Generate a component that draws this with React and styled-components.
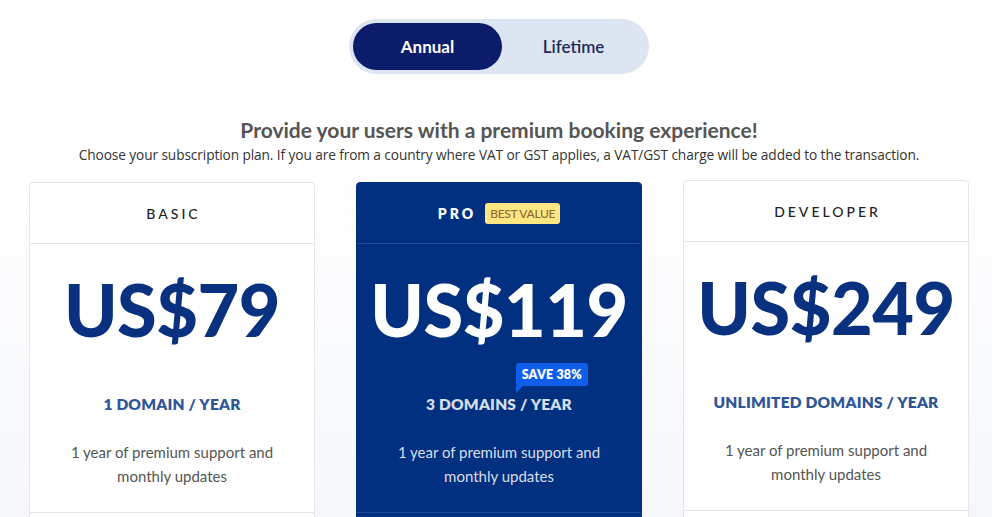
import styled, { createGlobalStyle } from "styled-components";

const Global = createGlobalStyle`
html,body{margin:0;padding:0;}
body{font-family:Lato,"Open Sans",sans-serif;background:linear-gradient(180deg,#ffffff 0%,#ffffff 30%,#f5f7fb 100%);min-height:517px;overflow:hidden;}
`;

const Page = styled.main`
width:992px;height:517px;display:flex;flex-direction:column;align-items:center;
padding:19px 0 0 6px;box-sizing:border-box;
& > *{flex-shrink:0;}`;

const Toggle = styled.div`
display:flex;width:300px;height:55px;padding:4px;box-sizing:border-box;
background:#dee5f2;border-radius:28px;`;

const ToggleBtn = styled.button`
flex:${p => p.$active ? "0 0 149px" : "1 1 auto"};
border:none;border-radius:24px;cursor:pointer;font-family:Lato,sans-serif;
font-size:17px;font-weight:${p => p.$active ? 700 : 600};
background:${p => p.$active ? "#0a1c6a" : "transparent"};
color:${p => p.$active ? "#fff" : "#1d2b5c"};`;

const Title = styled.h1`
margin:43px 0 0;font-size:21px;font-weight:700;color:#555;line-height:26px;`;

const Sub = styled.p`
margin:3px 0 0;font-family:"Open Sans",sans-serif;font-size:13.7px;color:#333;line-height:18px;letter-spacing:-0.1px;`;

const Cards = styled.div`
display:flex;gap:41px;margin-top:18px;align-items:flex-start;`;

const Card = styled.section`
width:286px;height:400px;box-sizing:border-box;border-radius:4px;
background:${p => p.$pro ? "#00307f" : "#fff"};
border:1px solid ${p => p.$pro ? "#00307f" : "#e3e6ec"};
display:flex;flex-direction:column;align-items:center;text-align:center;
margin-top:${p => p.$up ? "-2px" : "0"};`;

const Header = styled.div`
width:100%;height:60px;flex-shrink:0;display:flex;align-items:center;justify-content:center;gap:8px;
border-bottom:1px solid ${p => p.$pro ? "#1e4a92" : "#e3e6ec"};`;

const PlanName = styled.span`
font-size:14px;letter-spacing:3px;margin-right:-3px;
font-weight:${p => p.$pro ? 800 : 500};color:${p => p.$pro ? "#fff" : "#222"};`;

const BestValue = styled.span`
background:#ffe680;color:#8b6a3a;font-size:12px;font-weight:500;letter-spacing:-0.3px;
padding:3px 5px;border-radius:3px;margin-left:4px;`;

const Price = styled.div`
margin-top:29px;font-size:72px;font-weight:900;line-height:1;letter-spacing:-0.5px;
color:${p => p.$pro ? "#fff" : "#0a3080"};`;

const Domains = styled.div`
position:relative;margin-top:50px;font-size:15.5px;font-weight:800;letter-spacing:0.2px;
color:${p => p.$pro ? "#d5dcea" : "#2e5597"};`;

const Save = styled.span`
position:absolute;right:-16px;top:-32px;background:#0f5fec;color:#fff;font-size:12.5px;
font-weight:800;padding:4px 6px;border-radius:3px;white-space:nowrap;letter-spacing:0.2px;
&::after{content:"";position:absolute;left:0;bottom:-7px;border-left:7px solid #0f5fec;border-bottom:7px solid transparent;}`;

const Desc = styled.p`
margin:27px 0 0;font-size:15px;line-height:24px;padding:0 30px;
color:${p => p.$pro ? "#d9deea" : "#555"};`;

const Footer = styled.div`
width:100%;margin-top:24px;border-top:1px solid ${p => p.$pro ? "#1e4a92" : "#e3e6ec"};`;

const plans = [
  { name: "BASIC", price: "US$79", domains: "1 DOMAIN / YEAR" },
  { name: "PRO", price: "US$119", domains: "3 DOMAINS / YEAR", pro: true },
  { name: "DEVELOPER", price: "US$249", domains: "UNLIMITED DOMAINS / YEAR", up: true },
];

export default function App() {
  return (
    <>
      <Global />
      <Page>
        <Toggle>
          <ToggleBtn $active>Annual</ToggleBtn>
          <ToggleBtn>Lifetime</ToggleBtn>
        </Toggle>
        <Title>Provide your users with a premium booking experience!</Title>
        <Sub>Choose your subscription plan. If you are from a country where VAT or GST applies, a VAT/GST charge will be added to the transaction.</Sub>
        <Cards>
          {plans.map(p => (
            <Card key={p.name} $pro={p.pro} $up={p.up}>
              <Header $pro={p.pro}>
                <PlanName $pro={p.pro}>{p.name}</PlanName>
                {p.pro && <BestValue>BEST VALUE</BestValue>}
              </Header>
              <Price $pro={p.pro}>{p.price}</Price>
              <Domains $pro={p.pro}>
                {p.domains}
                {p.pro && <Save>SAVE 38%</Save>}
              </Domains>
              <Desc $pro={p.pro}>1 year of premium support and monthly updates</Desc>
              <Footer $pro={p.pro} />
            </Card>
          ))}
        </Cards>
      </Page>
    </>
  );
}
